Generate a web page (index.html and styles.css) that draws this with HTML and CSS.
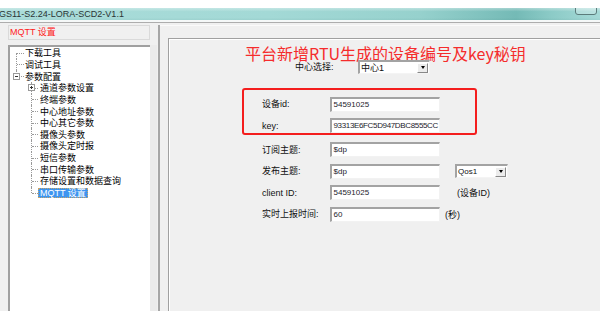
FILE: index.html
```html
<!DOCTYPE html>
<html lang="zh-CN">
<head>
<meta charset="utf-8">
<title>MQTT 设置</title>
<link rel="stylesheet" href="styles.css">
</head>
<body>
<div class="window">
  <div class="cap-strip"></div>
  <div class="titlebar">
    <span class="title">GS11-S2.24-LORA-SCD2-V1.1</span>
    <span class="winbtn"></span>
  </div>
  <div class="main">
    <div class="left">
      <div class="caption">MQTT 设置</div>
      <div class="tree">
        <div class="node l1 first">下载工具</div>
        <div class="node l1">调试工具</div>
        <div class="node l1 last"><span class="box minus"></span>参数配置</div>
        <div class="node l2"><span class="box plus"></span>通道参数设置</div>
        <div class="node l2">终端参数</div>
        <div class="node l2">中心地址参数</div>
        <div class="node l2">中心其它参数</div>
        <div class="node l2">摄像头参数</div>
        <div class="node l2">摄像头定时报</div>
        <div class="node l2">短信参数</div>
        <div class="node l2">串口传输参数</div>
        <div class="node l2">存储设置和数据查询</div>
        <div class="node l2 last selected"><span class="hl">MQTT 设置</span></div>
      </div>
    </div>
    <div class="splitter"></div>
    <div class="right">
      <div class="panel">
        <div class="heading">平台新增RTU生成的设备编号及key秘钥</div>
        <div class="row center-row">
          <span class="lbl lbl-center">中心选择:</span>
          <span class="combo combo-center"><span class="val">中心1</span><span class="drop"></span></span>
        </div>
        <div class="redbox">
          <div class="row"><span class="lbl">设备id:</span><span class="inp">54591025</span></div>
          <div class="row"><span class="lbl">key:</span><span class="inp key">93313E6FC5D947DBC8555CC</span></div>
        </div>
        <div class="rows">
          <div class="row"><span class="lbl">订阅主题:</span><span class="inp">$dp</span></div>
          <div class="row"><span class="lbl">发布主题:</span><span class="inp">$dp</span><span class="combo combo-qos"><span class="val qos">Qos1</span><span class="drop"></span></span></div>
          <div class="row"><span class="lbl">client ID:</span><span class="inp">54591025</span><span class="note">(设备ID)</span></div>
          <div class="row"><span class="lbl">实时上报时间:</span><span class="inp">60</span><span class="unit">(秒)</span></div>
        </div>
      </div>
    </div>
  </div>
</div>
</body>
</html>
```

FILE: styles.css
```css
html, body {
  margin: 0;
  padding: 0;
}
body {
  width: 600px;
  height: 311px;
  overflow: hidden;
  background: #f0f0f0;
  font-family: "Liberation Sans", "Noto Sans CJK SC", sans-serif;
  font-size: 9px;
  color: #111;
}
.window {
  display: flex;
  flex-direction: column;
  height: 311px;
}
.cap-strip {
  height: 8px;
  flex: none;
  background: #fff;
}
.titlebar {
  height: 12px;
  flex: none;
  display: flex;
  justify-content: space-between;
  overflow: hidden;
  background:
    linear-gradient(to bottom, rgba(255,255,255,0.35), rgba(255,255,255,0) 30%, rgba(255,255,255,0) 80%, rgba(0,60,60,0.05)),
    linear-gradient(to right, #a9dcd9 0%, #a3d9d6 45%, #96d1cd 70%, #74bab6 86%, #8ccbc7 92%, #a6dad7 100%);
  border-bottom: 2px solid #f5f8f8;
}
.title {
  font-size: 9px;
  line-height: 12px;
  margin-left: -1px;
  color: #2b3535;
  white-space: nowrap;
}
.winbtn {
  width: 22px;
  height: 14px;
  margin: -7px 3px 0 0;
  border: 1px solid #5b7c7b;
  border-radius: 3px;
  box-sizing: border-box;
  background: rgba(255,255,255,0.25);
}
.main {
  flex: 1;
  min-height: 0;
  display: flex;
  border-top: 1px solid #adadad;
}
.left {
  width: 142px;
  flex: none;
  margin-left: 8px;
  padding-top: 2px;
  display: flex;
  flex-direction: column;
}
.caption {
  height: 15px;
  flex: none;
  box-sizing: border-box;
  border: 1px solid #dadada;
  color: #ff2020;
  line-height: 13px;
  padding-left: 1px;
  white-space: nowrap;
}
.tree {
  margin-top: 5px;
  flex: 1;
  background: #fff;
  border-top: 2px solid #a0a0a0;
  border-left: 2px solid #a0a0a0;
}
.node {
  position: relative;
  height: 11.65px;
  display: flex;
  align-items: center;
  white-space: nowrap;
  color: #000;
}
.l1 { padding-left: 15px; }
.l2 { padding-left: 30px; }
.node::before {
  content: "";
  position: absolute;
  top: 0;
  bottom: 0;
  left: 6px;
  border-left: 1px dotted #9a9a9a;
}
.l2::before { left: 21px; }
.first::before { top: 50%; }
.last::before { bottom: 50%; }
.node::after {
  content: "";
  position: absolute;
  top: 50%;
  left: 7px;
  width: 7px;
  border-top: 1px dotted #9a9a9a;
}
.l2::after { left: 22px; width: 6px; }
.box {
  position: absolute;
  left: 3px;
  top: 50%;
  margin-top: -3.5px;
  width: 7px;
  height: 7px;
  box-sizing: border-box;
  border: 1px solid #9a9a9a;
  background: #fff;
  z-index: 1;
}
.l2 .box { left: 18px; }
.box::before {
  content: "";
  position: absolute;
  left: 1px;
  right: 1px;
  top: 2px;
  height: 1px;
  background: #333;
}
.plus::after {
  content: "";
  position: absolute;
  top: 1px;
  bottom: 1px;
  left: 2px;
  width: 1px;
  background: #333;
}
.selected { padding-left: 28px; }
.hl {
  height: 10px;
  box-sizing: border-box;
  line-height: 8px;
  padding: 0 1px;
  background: #3d95f0;
  color: #fff;
  border: 1px dotted #c9a56a;
}
.splitter {
  width: 10px;
  flex: none;
  margin-top: 2px;
  background:
    linear-gradient(#a6a6a6, #a6a6a6) right 0 top 0 / 2px 100% no-repeat,
    linear-gradient(#ebebeb, #ebebeb) left 0 top 20px / 7px 100% no-repeat;
}
.right {
  flex: 1;
  margin-top: 2px;
  border-top: 1px solid #fafafa;
  padding: 12px 0 0 8px;
  display: flex;
}
.panel {
  flex: 1;
  border-top: 1px solid #a0a0a0;
  border-left: 1px solid #a0a0a0;
  box-shadow: inset 1px 1px 0 #fff;
  padding: 1px 0 0 1px;
}
.heading {
  margin: 6px 0 0 75px;
  height: 14px;
  line-height: 14px;
  font-size: 16px;
  color: #f52c2c;
  font-family: "Noto Sans CJK SC", sans-serif;
  white-space: nowrap;
}
.row {
  display: flex;
  align-items: center;
  height: 15px;
  white-space: nowrap;
}
.center-row {
  padding-left: 125px;
  height: 14px;
}
.lbl {
  width: 68px;
  flex: none;
  line-height: 12px;
}
.lbl-center { width: 63px; }
.combo {
  display: flex;
  align-items: center;
  height: 14px;
  box-sizing: border-box;
  border-style: solid;
  border-width: 2px 1px 1px 2px;
  border-color: #a3a3a3 #f4f4f4 #f4f4f4 #a3a3a3;
  background: #fff;
  flex: none;
}
.combo .val {
  flex: 1;
  padding-left: 1px;
  line-height: 10px;
}
.combo .qos { font-size: 8px; }
.drop {
  width: 11px;
  height: 10px;
  box-sizing: border-box;
  border: 1px solid;
  border-color: #fff #888 #888 #fff;
  background: #ececec;
  display: flex;
  align-items: center;
  justify-content: center;
  margin-right: 1px;
}
.drop::before {
  content: "";
  border-left: 2.5px solid transparent;
  border-right: 2.5px solid transparent;
  border-top: 3px solid #000;
}
.combo-center { width: 72px; }
.combo-qos { width: 53px; margin-left: 15px; }
.redbox {
  margin: 14px 0 0 72px;
  width: 235px;
  height: 47px;
  box-sizing: border-box;
  border: 2px solid #f41e1e;
  border-radius: 3px;
  padding: 6.5px 0 0 18px;
  display: flex;
  flex-direction: column;
  gap: 6.5px;
}
.rows {
  margin-top: 7px;
  padding-left: 92px;
  display: flex;
  flex-direction: column;
  gap: 6.5px;
}
.inp {
  width: 110px;
  height: 15px;
  flex: none;
  box-sizing: border-box;
  border-style: solid;
  border-width: 2px 1px 1px 2px;
  border-color: #a3a3a3 #f2f2f2 #f2f2f2 #a3a3a3;
  background: #fff;
  font-size: 8px;
  line-height: 12px;
  padding-left: 1.5px;
  overflow: hidden;
  white-space: nowrap;
  color: #1c1c2c;
}
.key { letter-spacing: -0.35px; }
.note { margin-left: 17px; }
.unit { margin-left: 5px; }
```
